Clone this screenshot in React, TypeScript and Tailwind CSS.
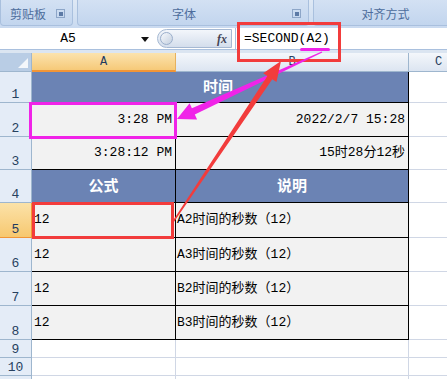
import type { ReactNode } from 'react'

const MONO = "font-['Liberation_Mono','Noto_Sans_CJK_SC',monospace]"
const CJK = "font-['Noto_Sans_CJK_SC','Liberation_Sans',sans-serif]"

const ROWS = [
    { n: '1', h: 'h-[31px]' },
    { n: '2', h: 'h-[34px]' },
    { n: '3', h: 'h-[33px]' },
    { n: '4', h: 'h-[33px]' },
    { n: '5', h: 'h-[35px]' },
    { n: '6', h: 'h-[34px]' },
    { n: '7', h: 'h-[34px]' },
    { n: '8', h: 'h-[34px]' },
    { n: '9', h: 'h-[18px]' },
    { n: '10', h: 'h-[18px]' },
    { n: '', h: 'h-[18px]' },
]

const NOTES = [
    'A2时间的秒数（12）',
    'A3时间的秒数（12）',
    'B2时间的秒数（12）',
    'B3时间的秒数（12）',
]

// tapered arrow polygon from (sx,sy) to tip (tx,ty)
function arrowPoints(sx: number, sy: number, tx: number, ty: number, head: number, wing: number, w0: number, w1: number) {
    const dx = tx - sx
    const dy = ty - sy
    const len = Math.hypot(dx, dy)
    const ux = dx / len
    const uy = dy / len
    const nx = -uy
    const ny = ux
    const bx = tx - ux * head
    const by = ty - uy * head
    const pts = [
        [sx + nx * w0, sy + ny * w0],
        [bx + nx * w1, by + ny * w1],
        [bx + nx * wing, by + ny * wing],
        [tx, ty],
        [bx - nx * wing, by - ny * wing],
        [bx - nx * w1, by - ny * w1],
        [sx - nx * w0, sy - ny * w0],
    ]
    return pts.map(p => `${p[0].toFixed(1)},${p[1].toFixed(1)}`).join(' ')
}

function RowHead({ n, h, active }: { n: string; h: string; active?: boolean }) {
    return (
        <div
            className={`${h} flex items-end justify-center pb-[1px] border-b border-r text-[13px] leading-none ${MONO} ${
                active
                    ? 'bg-gradient-to-b from-[#fbe2a8] to-[#f7c86f] border-r-[#f29536] border-b-[#f29536] text-[#1f3a5f]'
                    : 'bg-[#e4ecf7] border-[#9eb6ce] text-[#27415f]'
            }`}
        >
            {n}
        </div>
    )
}

function Cell({ className, children }: { className: string; children?: ReactNode }) {
    return <div className={`flex items-center overflow-hidden whitespace-nowrap ${className}`}>{children}</div>
}

function Launcher() {
    return (
        <svg width="9" height="9" viewBox="0 0 9 9" className="absolute right-[7px] top-[9px]">
            <rect x="0.5" y="0.5" width="8" height="8" fill="none" stroke="#8da6c8" />
            <rect x="3" y="3" width="4" height="4" fill="#5c7aa6" />
        </svg>
    )
}

export default function App() {
    const grid = 'border-[#d0d7e5]'
    const data = `bg-[#f2f2f2] border-b border-r border-black text-[13px] text-black ${MONO}`

    return (
        <div className="relative w-[447px] h-[379px] overflow-hidden bg-white">
            {/* Ribbon group labels */}
            <div className={`flex h-[28px] gap-[4px] bg-gradient-to-b from-[#dfe9f5] to-[#c9daf0] pb-[2px] ${CJK}`}>
                <div className="relative w-[73px] rounded-b-[4px] border border-t-0 border-[#a9c0de] bg-gradient-to-b from-[#d3e1f3] to-[#c2d5ee] flex items-center pl-[9px] pt-[3px] text-[12px] text-[#4d6d9c]">
                    剪贴板
                    <Launcher />
                </div>
                <div className="relative w-[232px] rounded-b-[4px] border border-t-0 border-[#a9c0de] bg-gradient-to-b from-[#d3e1f3] to-[#c2d5ee] flex items-center justify-center pr-[18px] pt-[3px] text-[12px] text-[#4d6d9c]">
                    字体
                    <Launcher />
                </div>
                <div className="relative flex-1 rounded-bl-[4px] border border-t-0 border-r-0 border-[#a9c0de] bg-gradient-to-b from-[#d3e1f3] to-[#c2d5ee] flex items-center justify-center pl-[10px] pt-[3px] text-[12px] text-[#4d6d9c]">
                    对齐方式
                </div>
            </div>

            {/* Formula bar */}
            <div className="flex h-[22px] bg-white border-b border-[#a9c0de]">
                <div className={`relative w-[150px] flex items-center justify-center pr-[14px] text-[13px] text-black ${MONO}`}>
                    A5
                    <svg width="8" height="5" viewBox="0 0 8 5" className="absolute right-[1px] top-[9px]">
                        <path d="M0 0H8L4 5Z" fill="#111" />
                    </svg>
                </div>
                <div className="w-[85px] flex items-center pl-[7px] pr-[3px]">
                    <div className="relative flex-1 h-[19px] rounded-l-full rounded-r-[3px] border border-[#a6b9d3] bg-gradient-to-b from-[#f3f6fb] to-[#d4deec] flex items-center">
                        <div className="ml-[2px] w-[13px] h-[13px] rounded-full border border-[#9aaecb] bg-gradient-to-br from-[#f7f9fc] to-[#c4d0e0]" />
                        <span className="ml-auto mr-[4px] text-[12px] italic font-bold text-[#445] font-['Liberation_Serif',serif]">fx</span>
                    </div>
                </div>
                <div className={`flex-1 border-l border-[#a9c0de] flex items-center pl-[8px] text-[13px] text-black ${MONO}`}>
                    =SECOND(A2)
                </div>
            </div>
            <div className="h-[3px] bg-[#dbe5f1]" />

            {/* Sheet */}
            <div className="grid grid-cols-[32px_144px_233px_1fr]">
                {/* column headers */}
                <div className="h-[19px] relative bg-[#b9cde5] border-r border-b border-[#9eb6ce]">
                    <svg width="10" height="10" viewBox="0 0 10 10" className="absolute right-[3px] bottom-[3px]">
                        <path d="M10 0V10H0Z" fill="#f4f7fb" />
                    </svg>
                </div>
                <div className={`h-[19px] flex items-center justify-center bg-gradient-to-b from-[#fbe3ad] to-[#f6c978] border-r border-[#e6b15e] border-b-2 border-b-[#f29536] text-[12px] text-[#1f3a5f] ${MONO}`}>
                    A
                </div>
                <div className={`h-[19px] flex items-center justify-center bg-gradient-to-b from-[#f4f7fb] to-[#dce5f1] border-r border-b border-[#9eb6ce] text-[12px] text-[#27415f] ${MONO}`}>
                    B
                </div>
                <div className={`h-[19px] flex items-center pl-[26px] bg-gradient-to-b from-[#f4f7fb] to-[#dce5f1] border-b border-[#9eb6ce] text-[12px] text-[#27415f] ${MONO}`}>
                    C
                </div>

                {/* row 1 */}
                <RowHead {...ROWS[0]} />
                <Cell className={`col-span-2 justify-center pr-[4px] pb-[2px] bg-[#6b83b4] border-b border-r border-black text-[15px] font-bold text-white ${CJK}`}>
                    时间
                </Cell>
                <Cell className={`border-b ${grid}`} />

                {/* row 2 */}
                <RowHead {...ROWS[1]} />
                <Cell className={`${data} justify-end pr-[3px]`}>3:28 PM</Cell>
                <Cell className={`${data} justify-end pr-[3px]`}>2022/2/7 15:28</Cell>
                <Cell className={`border-b ${grid}`} />

                {/* row 3 */}
                <RowHead {...ROWS[2]} />
                <Cell className={`${data} justify-end pr-[3px]`}>3:28:12 PM</Cell>
                <Cell className={`${data} justify-end pr-[3px]`}>15时28分12秒</Cell>
                <Cell className={`border-b ${grid}`} />

                {/* row 4 */}
                <RowHead {...ROWS[3]} />
                <Cell className={`justify-center pb-[2px] bg-[#6b83b4] border-b border-r border-black text-[15px] font-bold text-white ${CJK}`}>
                    公式
                </Cell>
                <Cell className={`justify-center pb-[2px] bg-[#6b83b4] border-b border-r border-black text-[15px] font-bold text-white ${CJK}`}>
                    说明
                </Cell>
                <Cell className={`border-b ${grid}`} />

                {/* rows 5-8 */}
                {NOTES.map((note, i) => (
                    <div key={note} className="contents">
                        <RowHead {...ROWS[4 + i]} active={i === 0} />
                        <Cell className={`${data} pl-[2px]`}>12</Cell>
                        <Cell className={`${data} pl-[1px]`}>{note}</Cell>
                        <Cell className={`border-b ${grid}`} />
                    </div>
                ))}

                {/* rows 9-11 */}
                {ROWS.slice(8).map((r, i) => (
                    <div key={i} className="contents">
                        <RowHead {...r} />
                        <Cell className={`border-b border-r ${grid}`} />
                        <Cell className={`border-b border-r ${grid}`} />
                        <Cell className={`border-b ${grid}`} />
                    </div>
                ))}
            </div>

            {/* annotation overlay */}
            <div className="absolute left-[29px] top-[102px] w-[148px] h-[37px] border-[3px] border-[#f023e8]" />
            <div className="absolute left-[32px] top-[202px] w-[142px] h-[37px] border-[3px] border-[#f23c3c]" />
            <div className="absolute left-[237px] top-[22px] w-[104px] h-[40px] border-[3px] border-[#f23c3c]" />
            <div className="absolute left-[300px] top-[48px] w-[30px] h-[3px] rounded-full bg-[#f023e8]" />
            <svg width="447" height="379" className="absolute left-0 top-0 pointer-events-none">
                <polygon points={arrowPoints(322, 52, 177, 119, 18, 9, 0.6, 3.5)} fill="#f023e8" />
                <polygon points={arrowPoints(173, 222, 281, 61, 20, 8, 0.7, 3)} fill="#f23c3c" />
            </svg>
        </div>
    )
}
